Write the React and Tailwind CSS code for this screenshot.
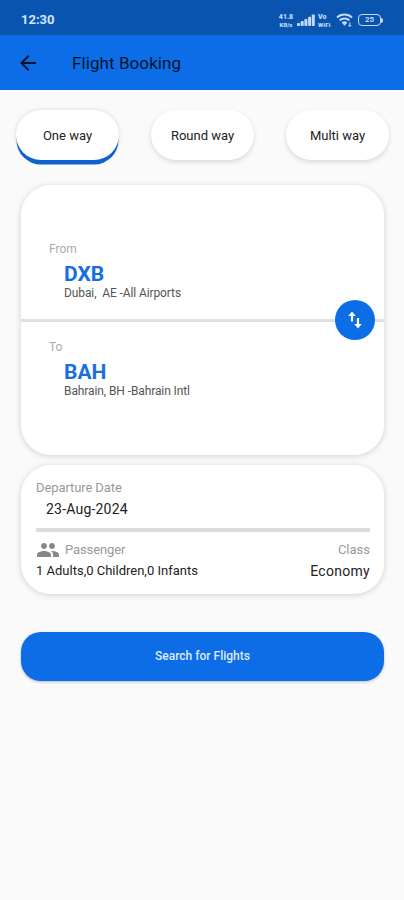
import React, { useState } from "react";
import clsx from "clsx";
import { MdArrowBack, MdPeople } from "react-icons/md";

const TRIP_TYPES = ["One way", "Round way", "Multi way"];

const StatusIcons = () => (
  <div className="flex items-center h-4 text-[#c3d9f8]">
    <div className="w-4 text-[7px] leading-[8px] font-black text-center">
      <div>41.8</div>
      <div className="text-[6px] leading-[7px]">KB/s</div>
    </div>
    <svg className="ml-[3px]" width="18" height="12" viewBox="0 0 18 12" fill="currentColor">
      <rect x="0" y="9" width="3" height="3" rx="0.8" />
      <rect x="3.7" y="7" width="3" height="5" rx="0.8" />
      <rect x="7.4" y="5" width="3" height="7" rx="0.8" />
      <rect x="11.1" y="2.8" width="3" height="9.2" rx="0.8" />
      <rect x="14.8" y="0.5" width="3" height="11.5" rx="0.8" />
    </svg>
    <div className="ml-[3px] w-4 text-[7px] leading-[8px] font-black">
      <div>Vo</div>
      <div className="text-[6px] leading-[7px] tracking-[0.2px]">WiFi</div>
    </div>
    <svg className="ml-[2px]" width="17" height="14" viewBox="0 0 17 14" fill="none" stroke="currentColor" strokeWidth="2">
      <path d="M1 4.6C5 0.6 12 0.6 16 4.6" />
      <path d="M3.6 7.4C6.2 4.8 10.8 4.8 13.4 7.4" />
      <path d="M5.6 9.4 8.5 12.8 11.4 9.4C9.8 8 7.2 8 5.6 9.4Z" fill="currentColor" stroke="none" />
      <path d="M13.8 9.5v4M12.3 12l1.5 1.5 1.5-1.5" strokeWidth="1" />
    </svg>
    <div className="ml-[5px] flex items-center">
      <div className="w-[23px] h-[12px] border-[1.5px] border-current rounded-[4px] flex items-center justify-center text-[8px] leading-none font-bold">
        25
      </div>
      <div className="w-[2px] h-[5px] bg-current rounded-r-sm" />
    </div>
  </div>
);

const TripTab = ({ label, active, onClick }) => (
  <button
    onClick={onClick}
    className={clsx(
      "w-[103px] h-[50px] pt-[2px] rounded-[25px] bg-white text-[13px] text-[#222] text-center",
      active
        ? "shadow-[0_5px_0_-0.5px_#0d62cf,0_0_4px_rgba(0,0,0,0.15)]"
        : "shadow-[0_2px_5px_rgba(0,0,0,0.14)]"
    )}
  >
    {label}
  </button>
);

const Airport = ({ title, code, name }) => (
  <div className="pl-7">
    <div className="text-[12px] leading-[14px] text-[#aaa]">{title}</div>
    <div className="pl-[15px] mt-[5px]">
      <div className="text-[21px] leading-[26px] font-bold text-[#1470e2]">{code}</div>
      <div className="-mt-px text-[12px] leading-[14px] tracking-[-0.1px] text-[#555] whitespace-pre">{name}</div>
    </div>
  </div>
);

const App = () => {
  const [tripType, setTripType] = useState("One way");

  return (
    <div className="w-[404px] h-[900px] overflow-hidden bg-[#fafafa] font-['Roboto',sans-serif]">
      <div className="h-[35px] bg-[#0854ae] flex items-center justify-between px-[21px] pt-[5px]">
        <span className="text-[13px] font-bold text-[#d5e5fc]">12:30</span>
        <StatusIcons />
      </div>

      <header className="h-[55px] bg-[#0c6de6] flex items-center pl-4 text-[#06142b]">
        <MdArrowBack className="text-2xl" />
        <h1 className="ml-8 pt-[2px] text-[17px] tracking-[0.08px]">Flight Booking</h1>
      </header>

      <div className="flex justify-between pl-4 pr-[15px] pt-5">
        {TRIP_TYPES.map((type) => (
          <TripTab key={type} label={type} active={type === tripType} onClick={() => setTripType(type)} />
        ))}
      </div>

      <main className="pl-[21px] pr-5 pt-[25px]">
        <section className="h-[270px] rounded-[30px] bg-white shadow-[0_1px_6px_rgba(0,0,0,0.17)]">
          <div className="h-[134px] pt-[57px]">
            <Airport title="From" code="DXB" name="Dubai,  AE -All Airports" />
          </div>
          <div className="relative h-[3px] bg-[#e0e0e0]">
            <button
              aria-label="Swap airports"
              className="absolute right-[9px] top-[1px] -translate-y-1/2 size-10 rounded-full bg-[#0c6de6] text-white flex items-center justify-center"
            >
              <svg width="16" height="20" viewBox="0 0 16 20" fill="none" stroke="currentColor" strokeWidth="2.2">
                <path d="M5 11.5V4" />
                <path d="M1.3 6 5 1.5 8.7 6Z" fill="currentColor" stroke="none" />
                <path d="M11 8V15" />
                <path d="M7.3 14 11 18.5l3.7-4.5Z" fill="currentColor" stroke="none" />
              </svg>
            </button>
          </div>
          <div className="pt-[18px]">
            <Airport title="To" code="BAH" name="Bahrain, BH -Bahrain Intl" />
          </div>
        </section>

        <section className="mt-[10px] h-[129px] rounded-[30px] bg-white shadow-[0_1px_6px_rgba(0,0,0,0.17)] pl-[15px] pr-[14px] pt-[15px]">
          <div className="text-[13px] leading-[15px] tracking-[-0.1px] text-[#999]">Departure Date</div>
          <div className="pl-[10px] mt-[5px] text-[14px] leading-[18px] tracking-[0.2px] text-[#222]">23-Aug-2024</div>
          <div className="mt-[10px] h-1 bg-[#dcdcdc]" />
          <div className="mt-[10px] flex items-center justify-between text-[13px] leading-4 text-[#999]">
            <div className="flex items-center gap-[5px]">
              <MdPeople className="text-2xl -my-1 text-[#888]" />
              <span className="tracking-[-0.1px]">Passenger</span>
            </div>
            <span>Class</span>
          </div>
          <div className="mt-1 flex items-center justify-between leading-[18px] text-[#222]">
            <span className="text-[13px]">1 Adults,0 Children,0 Infants</span>
            <span className="text-[14px] tracking-[0.3px]">Economy</span>
          </div>
        </section>

        <button className="mt-[38px] w-full h-[49px] pb-[2px] rounded-[20px] bg-[#0c6de6] text-[12px] font-medium text-[#dfeafc] shadow-[0_1px_3px_rgba(0,0,0,0.25)]">
          Search for Flights
        </button>
      </main>
    </div>
  );
};

export default App;
